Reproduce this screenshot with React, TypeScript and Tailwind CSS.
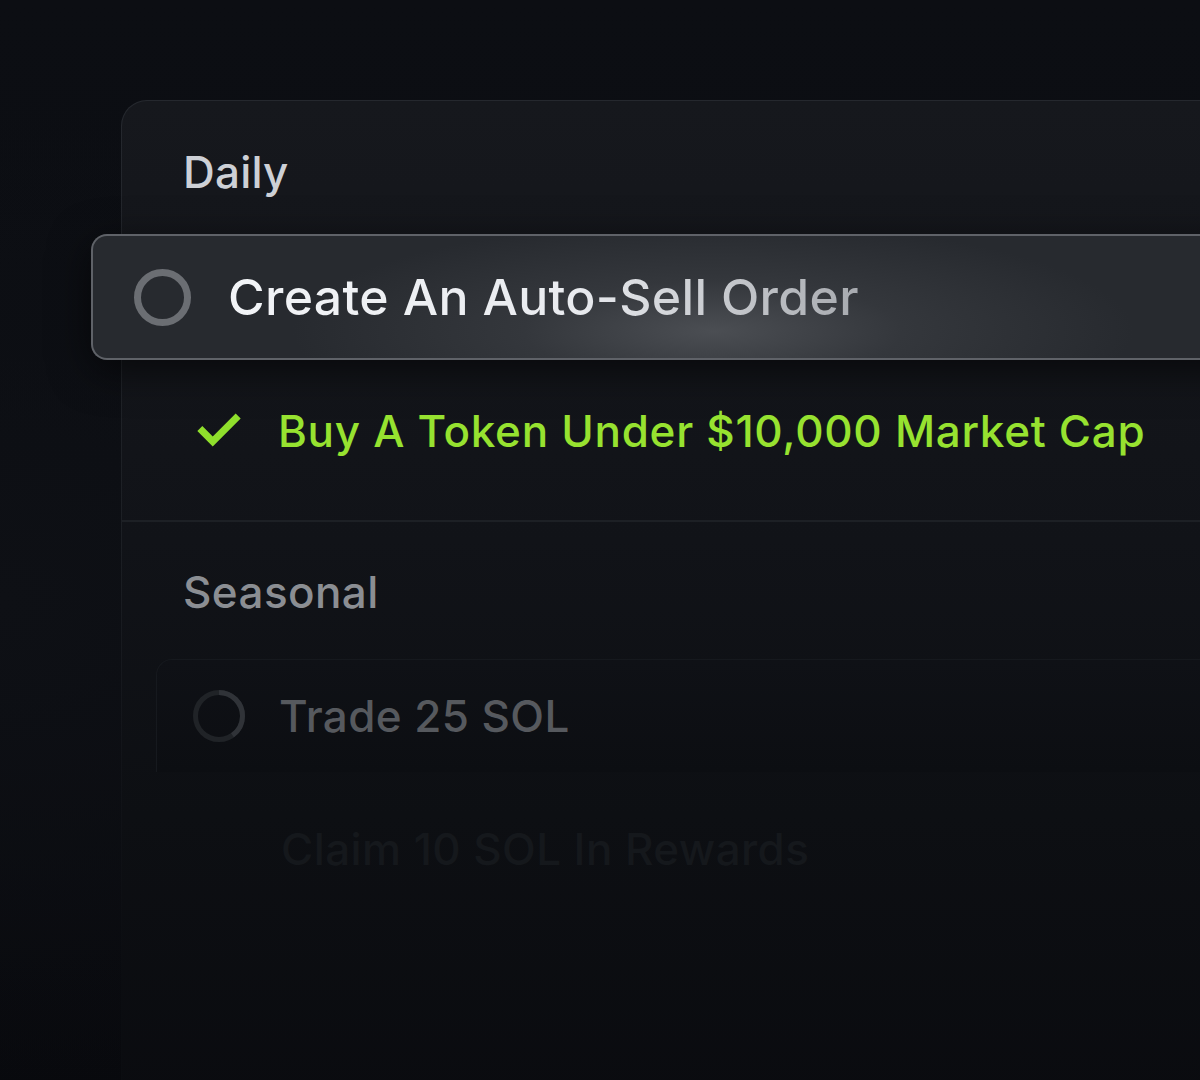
import { Check } from "lucide-react";

const font = { fontFamily: "Inter, 'Noto Sans', sans-serif" };

function Ring({ size, stroke, color, progress, progressColor }: { size: number; stroke: number; color: string; progress?: number; progressColor?: string }) {
  const r = (size - stroke) / 2;
  const c = 2 * Math.PI * r;
  return (
    <svg width={size} height={size} viewBox={`0 0 ${size} ${size}`} className="shrink-0">
      <circle cx={size / 2} cy={size / 2} r={r} fill="none" stroke={color} strokeWidth={stroke} />
      {progress !== undefined && (
        <circle
          cx={size / 2}
          cy={size / 2}
          r={r}
          fill="none"
          stroke={progressColor}
          strokeWidth={stroke}
          strokeDasharray={`${c * progress} ${c}`}
          transform={`rotate(-90 ${size / 2} ${size / 2})`}
        />
      )}
    </svg>
  );
}

export default function App() {
  return (
    <div
      className="w-[1200px] h-[1080px] overflow-hidden bg-[radial-gradient(ellipse_700px_500px_at_0px_600px,#0e1015_0%,transparent_100%),linear-gradient(180deg,#0c0e13_0%,#0b0d12_45%,#08090d_100%)] pt-[100px]"
      style={font}
    >
      {/* card edge: 1px gradient frame that fades out towards the bottom */}
      <div className="ml-[121px] w-[1200px] h-[1100px] rounded-tl-[26px] pl-px pt-px bg-[linear-gradient(180deg,#25282e_0%,#1c1f24_40%,#121419_60%,#0b0d11_80%)]">
        <div className="h-full rounded-tl-[25px] bg-[linear-gradient(180deg,#16181d_0%,#111318_40%,#0d0f13_65%,#090a0e_100%)]">
          {/* Daily */}
          <div className="pl-[61px] pt-[43px] pb-[34px] text-[44px] leading-[56px] font-medium text-[#cdd0d6] tracking-[0.2px]">
            Daily
          </div>

          <div className="-ml-[31px] h-[126px] rounded-l-[16px] border-2 border-r-0 border-[#5f6268] bg-[radial-gradient(ellipse_420px_110px_at_620px_95px,#4b4e53_0%,#34373c_45%,#272a2f_100%)] flex items-center pl-[41px] gap-[37px] shadow-[0_10px_40px_rgba(0,0,0,0.6)]">
            <Ring size={57} stroke={7} color="#6b6e73" />
            <span className="text-[50px] font-medium tracking-[0.3px] bg-[linear-gradient(90deg,#f2f4f7_0%,#e9ebef_55%,#a7aaaf_100%)] bg-clip-text text-transparent">
              Create An Auto-Sell Order
            </span>
          </div>

          <div className="flex items-center pl-[72px] gap-[34px] h-[160px] pb-[18px]">
            <Check size={50} strokeWidth={3.4} className="text-[#8fdf2c] shrink-0" strokeLinecap="square" strokeLinejoin="miter" />
            <span className="text-[44px] font-medium text-[#97e230] tracking-[0.7px]">Buy A Token Under $10,000 Market Cap</span>
          </div>

          <div className="h-[2px] bg-[#1d2025]" />

          {/* Seasonal */}
          <div className="pl-[61px] pt-[42px] pb-[39px] text-[44px] leading-[56px] font-medium text-[#8b8e93] tracking-[0.4px]">
            Seasonal
          </div>

          <div className="ml-[34px] h-[113px] rounded-tl-[16px] border-l border-t border-[#16191e] bg-[linear-gradient(180deg,#0f1116_0%,#0c0e12_100%)] flex items-center pl-[36px] gap-[34px]">
            <Ring size={52} stroke={5} color="#202327" progress={0.4} progressColor="#303338" />
            <span className="text-[44px] font-medium text-[#56595e] tracking-[0.4px]">Trade 25 SOL</span>
          </div>

          <div className="flex items-center pl-[159px] h-[154px]">
            <span className="text-[44px] font-medium text-[#15181c] tracking-[0.4px]">Claim 10 SOL In Rewards</span>
          </div>
        </div>
      </div>
    </div>
  );
}
